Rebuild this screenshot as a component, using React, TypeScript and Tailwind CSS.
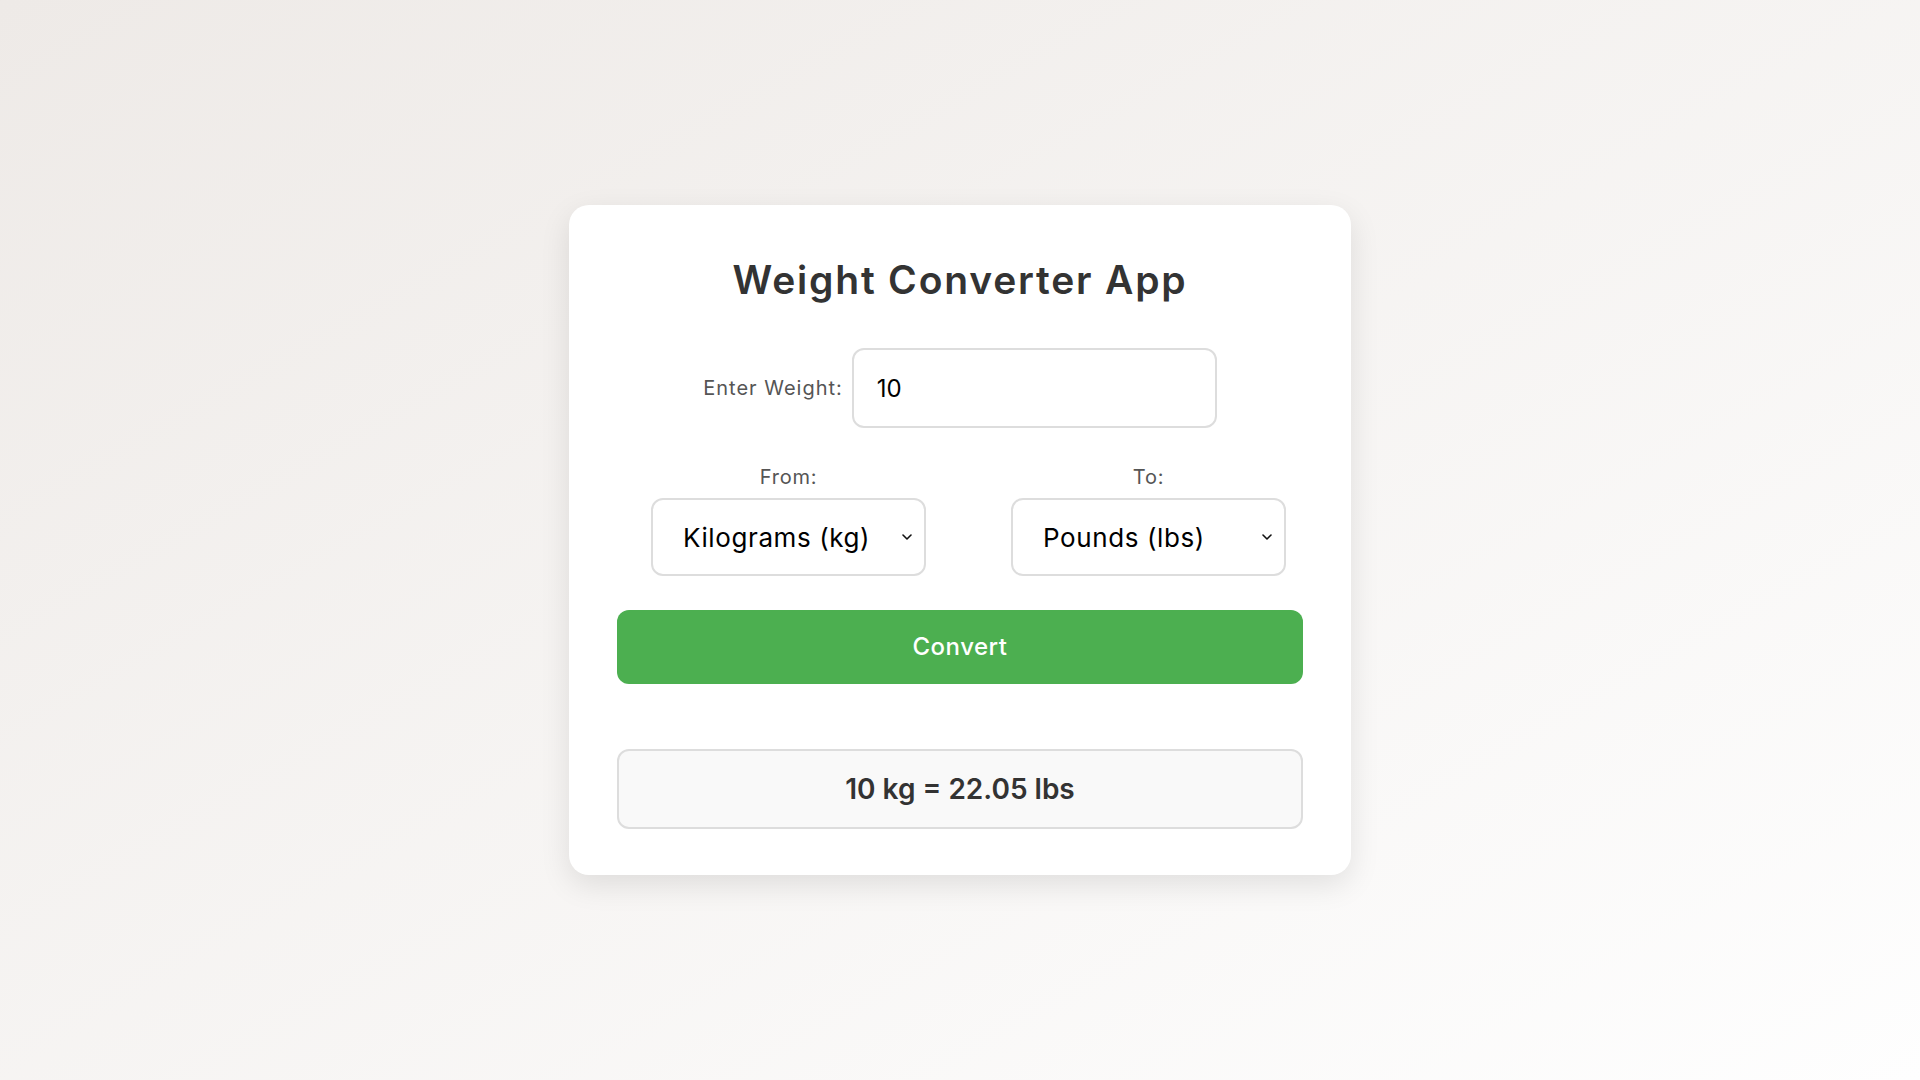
import { useState } from 'react';
import React from 'react';

const rates: Record<string, number> = {
  kg: 1,
  lbs: 0.45359237,
  g: 0.001,
  oz: 0.028349523125,
};

const Chevron = () => (
  <svg
    className="pointer-events-none absolute right-[14px] top-1/2 -translate-y-1/2"
    width="10"
    height="6"
    viewBox="0 0 10 6"
    fill="none"
  >
    <path d="M1 1l4 4 4-4" stroke="#111" strokeWidth="1.6" strokeLinecap="round" strokeLinejoin="round" />
  </svg>
);

const App = () => {
  const [weight, setWeight] = useState('10');
  const [from, setFrom] = useState('kg');
  const [to, setTo] = useState('lbs');
  const [result, setResult] = useState('10 kg = 22.05 lbs');

  const handleConvert = () => {
    const value = parseFloat(weight);
    if (isNaN(value)) {
      setResult('Please enter a valid number');
      return;
    }
    const converted = (value * rates[from]) / rates[to];
    setResult(`${value} ${from} = ${converted.toFixed(2)} ${to}`);
  };

  return (
    <div className="min-h-screen w-full flex items-center justify-center bg-linear-to-br from-[#eeeae7] to-[#fefefe] font-['Inter','Noto_Sans',sans-serif]">
      <div className="w-[782px] bg-white rounded-[20px] shadow-[0_10px_30px_rgba(0,0,0,0.1)] px-[48px] pt-[47px] pb-[46px]">
        <h1 className="text-center text-[39px] leading-[56px] font-semibold tracking-[1.8px] text-[#333]">
          Weight Converter App
        </h1>

        <div className="mt-[40px] flex items-center justify-center gap-[9px]">
          <label htmlFor="weight" className="text-[20px] tracking-[1px] text-[#555]">
            Enter Weight:
          </label>
          <input
            id="weight"
            type="text"
            value={weight}
            onChange={(e) => setWeight(e.target.value)}
            className="w-[365px] h-[80px] px-[23px] border-2 border-[#ddd] rounded-[12px] text-[24px] text-black outline-none"
          />
        </div>

        <div className="mt-[35px] flex pl-[34px] gap-[85px]">
          <div className="flex flex-col items-center gap-[7px]">
            <label className="text-[20px] leading-[28px] tracking-[0.8px] text-[#555]">From:</label>
            <div className="relative">
              <select
                value={from}
                onChange={(e) => setFrom(e.target.value)}
                className="appearance-none w-[275px] h-[78px] pl-[30px] pr-[34px] border-2 border-[#ddd] rounded-[12px] bg-white text-[26px] tracking-[0.6px] text-black outline-none"
              >
                <option value="kg">Kilograms (kg)</option>
                <option value="lbs">Pounds (lbs)</option>
                <option value="g">Grams (g)</option>
                <option value="oz">Ounces (oz)</option>
              </select>
              <Chevron />
            </div>
          </div>
          <div className="flex flex-col items-center gap-[7px]">
            <label className="text-[20px] leading-[28px] tracking-[0.8px] text-[#555]">To:</label>
            <div className="relative">
              <select
                value={to}
                onChange={(e) => setTo(e.target.value)}
                className="appearance-none w-[275px] h-[78px] pl-[30px] pr-[34px] border-2 border-[#ddd] rounded-[12px] bg-white text-[26px] tracking-[0.6px] text-black outline-none"
              >
                <option value="lbs">Pounds (lbs)</option>
                <option value="kg">Kilograms (kg)</option>
                <option value="g">Grams (g)</option>
                <option value="oz">Ounces (oz)</option>
              </select>
              <Chevron />
            </div>
          </div>
        </div>

        <button
          type="button"
          onClick={handleConvert}
          className="mt-[34px] w-full h-[74px] rounded-[12px] bg-[#4caf50] text-white text-[24px] tracking-[0.5px] font-medium"
        >
          Convert
        </button>

        <div className="mt-[65px] h-[80px] flex items-center justify-center border-2 border-[#ddd] rounded-[12px] bg-[#f9f9f9] text-[28px] font-semibold text-[#333]">
          {result}
        </div>
      </div>
    </div>
  );
};

export default App;
